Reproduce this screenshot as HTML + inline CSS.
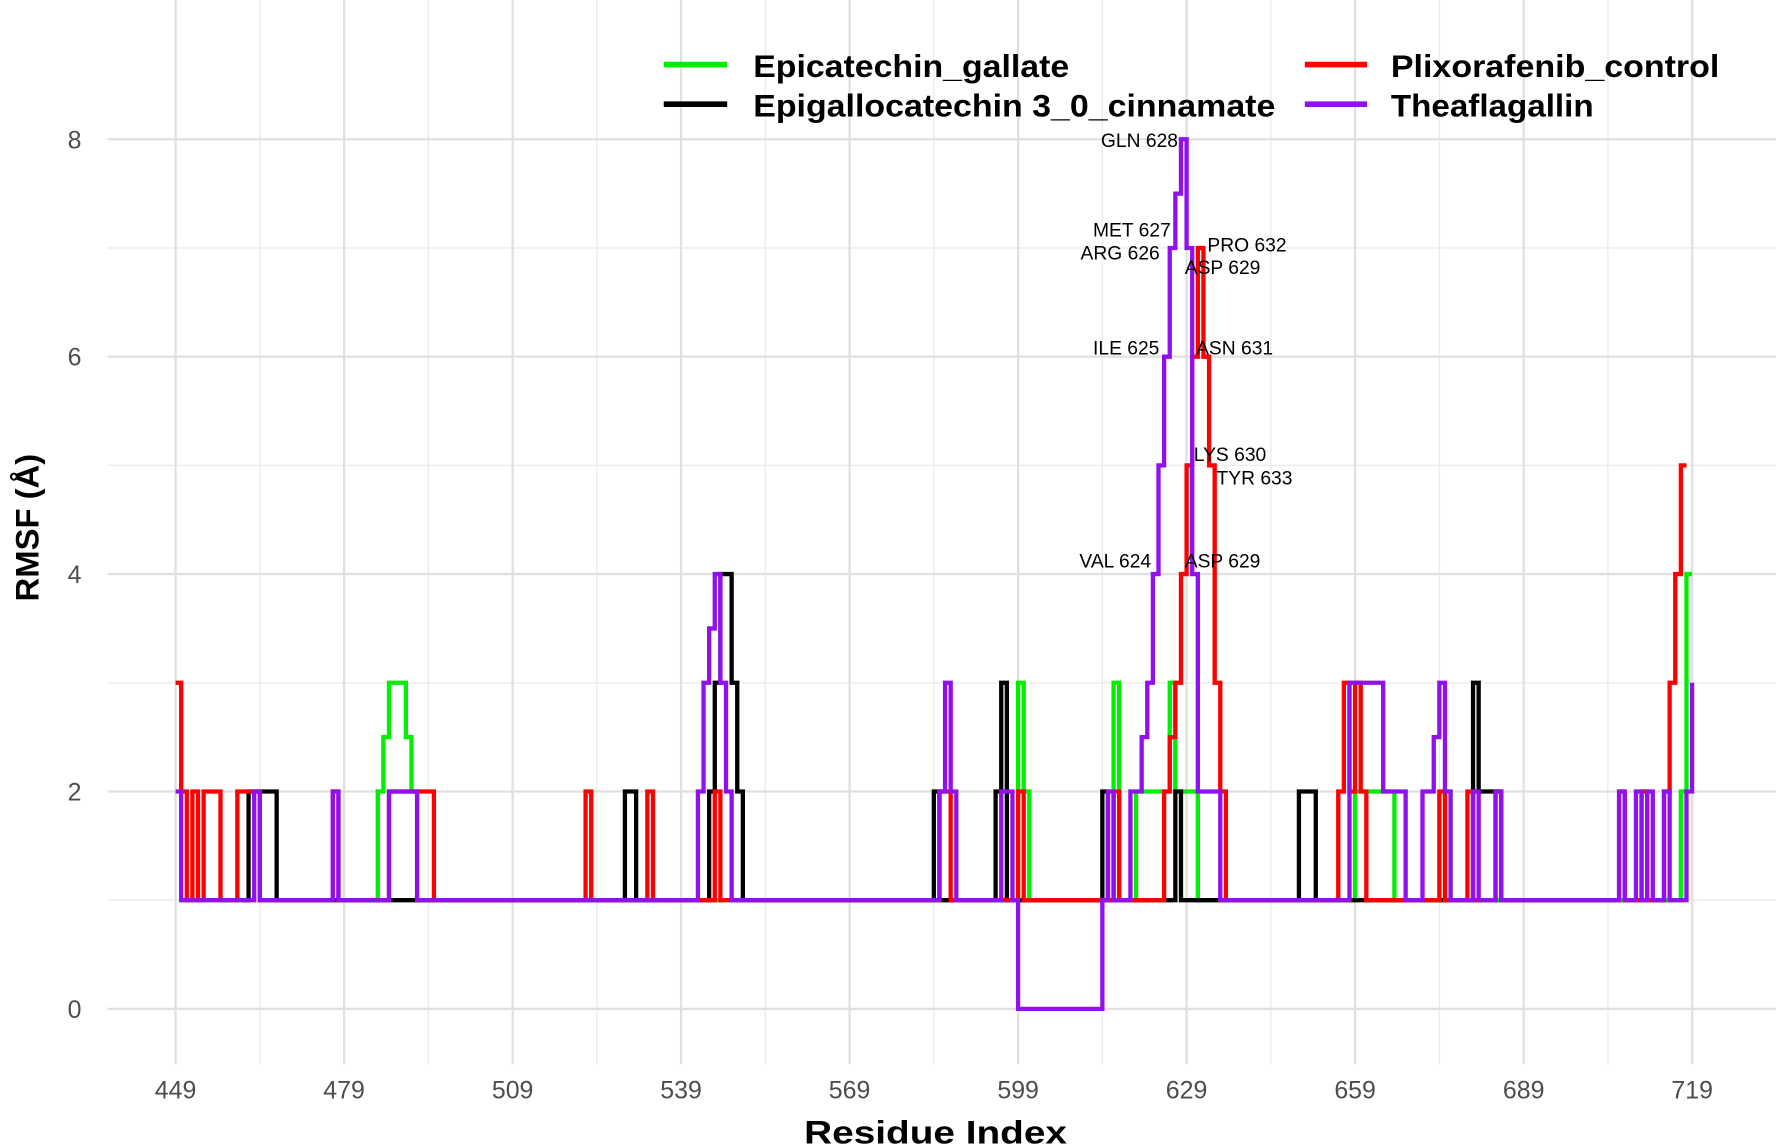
<!DOCTYPE html>
<html><head><meta charset="utf-8"><style>
html,body{margin:0;padding:0;background:#fff;}
svg{display:block}
</style></head><body>
<svg width="1776" height="1147" viewBox="0 0 1568 1013" preserveAspectRatio="none" xmlns="http://www.w3.org/2000/svg" font-family="Liberation Sans, sans-serif">
<rect width="1568" height="1013" fill="#fff"/>
<g stroke="#ebebeb" stroke-width="1.2">
<line x1="95" x2="1568" y1="795" y2="795"/><line x1="95" x2="1568" y1="603" y2="603"/><line x1="95" x2="1568" y1="411" y2="411"/><line x1="95" x2="1568" y1="219" y2="219"/>
<line y1="0" y2="940" x1="229.4" x2="229.4"/><line y1="0" y2="940" x1="378.2" x2="378.2"/><line y1="0" y2="940" x1="527" x2="527"/><line y1="0" y2="940" x1="675.7" x2="675.7"/><line y1="0" y2="940" x1="824.5" x2="824.5"/><line y1="0" y2="940" x1="973.3" x2="973.3"/><line y1="0" y2="940" x1="1122" x2="1122"/><line y1="0" y2="940" x1="1270.8" x2="1270.8"/><line y1="0" y2="940" x1="1419.6" x2="1419.6"/>
</g>
<g stroke="#e0e0e0" stroke-width="2">
<line x1="95" x2="1568" y1="891" y2="891"/><line x1="95" x2="1568" y1="699" y2="699"/><line x1="95" x2="1568" y1="507" y2="507"/><line x1="95" x2="1568" y1="315" y2="315"/><line x1="95" x2="1568" y1="123" y2="123"/>
<line y1="0" y2="940" x1="155" x2="155"/><line y1="0" y2="940" x1="303.8" x2="303.8"/><line y1="0" y2="940" x1="452.6" x2="452.6"/><line y1="0" y2="940" x1="601.3" x2="601.3"/><line y1="0" y2="940" x1="750.1" x2="750.1"/><line y1="0" y2="940" x1="898.9" x2="898.9"/><line y1="0" y2="940" x1="1047.6" x2="1047.6"/><line y1="0" y2="940" x1="1196.4" x2="1196.4"/><line y1="0" y2="940" x1="1345.2" x2="1345.2"/><line y1="0" y2="940" x1="1494" x2="1494"/>
</g>
<g transform="translate(155,891) scale(4.959,-96)" fill="none" stroke-width="4.3" stroke-linejoin="miter">
<path vector-effect="non-scaling-stroke" stroke="#00ee00" d="M33 1 H36 V2 H37 V2.5 H38 V3 H40 V3 H41 V2.5 H42 V2 H43 V1 H150 V3 H151 V2 H152 V1 H167 V3 H168 V1 H171 V2 H177 V3 H178 V2 H182 V1 H210 V2 H217 V1 H226 V2 H227 V1 H268 V2 H269 V4 H270"/>
<path vector-effect="non-scaling-stroke" stroke="#000000" d="M12 1 H13 V2 H18 V1 H80 V2 H82 V1 H95 V2 H96 V3 H97 V4 H99 V3 H100 V2 H101 V1 H135 V2 H136 V1 H146 V2 H147 V3 H148 V1 H165 V2 H166 V1 H178 V2 H179 V1 H200 V2 H203 V1 H231 V3 H232 V2 H236 V1 H240"/>
<path vector-effect="non-scaling-stroke" stroke="#ff0000" d="M0 3 H1 V2 H2 V1 H3 V2 H4 V1 H5 V2 H8 V1 H11 V2 H15 V1 H28 V2 H29 V1 H38 V2 H46 V1 H73 V2 H74 V1 H84 V2 H85 V1 H96 V2 H97 V1 H136 V2 H138 V1 H150 V2 H151 V1 H167 V2 H168 V1 H176 V2 H177 V2.5 H178 V3 H179 V4 H180 V5 H181 V6 H182 V7 H183 V6 H184 V5 H185 V3 H186 V2 H187 V1 H207 V2 H208 V3 H209 V2 H210 V3 H211 V2 H212 V1 H225 V2 H226 V1 H230 V2 H231 V1 H235 V2 H236 V1 H257 V2 H258 V1 H261 V2 H262 V1 H265 V2 H266 V3 H267 V4 H268 V5 H269"/>
<path vector-effect="non-scaling-stroke" stroke="#9010ee" d="M0 2 H1 V1 H14 V2 H15 V1 H28 V2 H29 V1 H38 V2 H43 V1 H93 V2 H94 V3 H95 V3.5 H96 V4 H97 V3 H98 V2 H99 V1 H136 V2 H137 V3 H138 V2 H139 V1 H147 V2 H149 V1 H150 V0 H165 V1 H166 V2 H167 V1 H170 V2 H172 V2.5 H173 V3 H174 V4 H175 V5 H176 V6 H177 V7 H178 V7.5 H179 V8 H180 V7 H181 V4 H182 V2 H186 V1 H209 V3 H215 V2 H219 V1 H222 V2 H224 V2.5 H225 V3 H226 V2 H227 V1 H231 V2 H232 V1 H235 V2 H236 V1 H257 V2 H258 V1 H260 V2 H261 V1 H262 V2 H263 V1 H265 V2 H266 V1 H269 V2 H270 V3"/>
</g>
<g font-size="17" fill="#000">
<text x="972" y="130">GLN 628</text><text x="965" y="209">MET 627</text><text x="954" y="229">ARG 626</text>
<text x="1066" y="222">PRO 632</text><text x="1046" y="242">ASP 629</text><text x="965" y="313">ILE 625</text><text x="1056" y="313">ASN 631</text>
<text x="1054" y="407">LYS 630</text><text x="1074" y="428">TYR 633</text><text x="953" y="501">VAL 624</text><text x="1046" y="501">ASP 629</text>
</g>
<g font-size="22" fill="#4d4d4d" text-anchor="end">
<text x="72" y="899">0</text><text x="72" y="707">2</text><text x="72" y="515">4</text><text x="72" y="323">6</text><text x="72" y="131">8</text>
</g>
<g font-size="22" fill="#4d4d4d" text-anchor="middle">
<text x="155" y="970">449</text><text x="303.8" y="970">479</text><text x="452.6" y="970">509</text><text x="601.3" y="970">539</text><text x="750.1" y="970">569</text><text x="898.9" y="970">599</text><text x="1047.6" y="970">629</text><text x="1196.4" y="970">659</text><text x="1345.2" y="970">689</text><text x="1494" y="970">719</text>
</g>
<text x="826" y="1010" font-size="29" font-weight="bold" text-anchor="middle" textLength="232" lengthAdjust="spacingAndGlyphs">Residue Index</text>
<text transform="translate(34,466) rotate(-90)" font-size="29" font-weight="bold" text-anchor="middle">RMSF (Å)</text>
<g font-size="28" font-weight="bold">
<line x1="586" x2="642" y1="57" y2="57" stroke="#00ee00" stroke-width="5"/><text x="665" y="68" textLength="279" lengthAdjust="spacingAndGlyphs">Epicatechin_gallate</text>
<line x1="586" x2="642" y1="92" y2="92" stroke="#000" stroke-width="5"/><text x="665" y="103" textLength="461" lengthAdjust="spacingAndGlyphs">Epigallocatechin 3_0_cinnamate</text>
<line x1="1152" x2="1207" y1="57" y2="57" stroke="#ff0000" stroke-width="5"/><text x="1228" y="68" textLength="290" lengthAdjust="spacingAndGlyphs">Plixorafenib_control</text>
<line x1="1152" x2="1207" y1="92" y2="92" stroke="#9010ee" stroke-width="5"/><text x="1228" y="103" textLength="179" lengthAdjust="spacingAndGlyphs">Theaflagallin</text>
</g>
</svg>
</body></html>
